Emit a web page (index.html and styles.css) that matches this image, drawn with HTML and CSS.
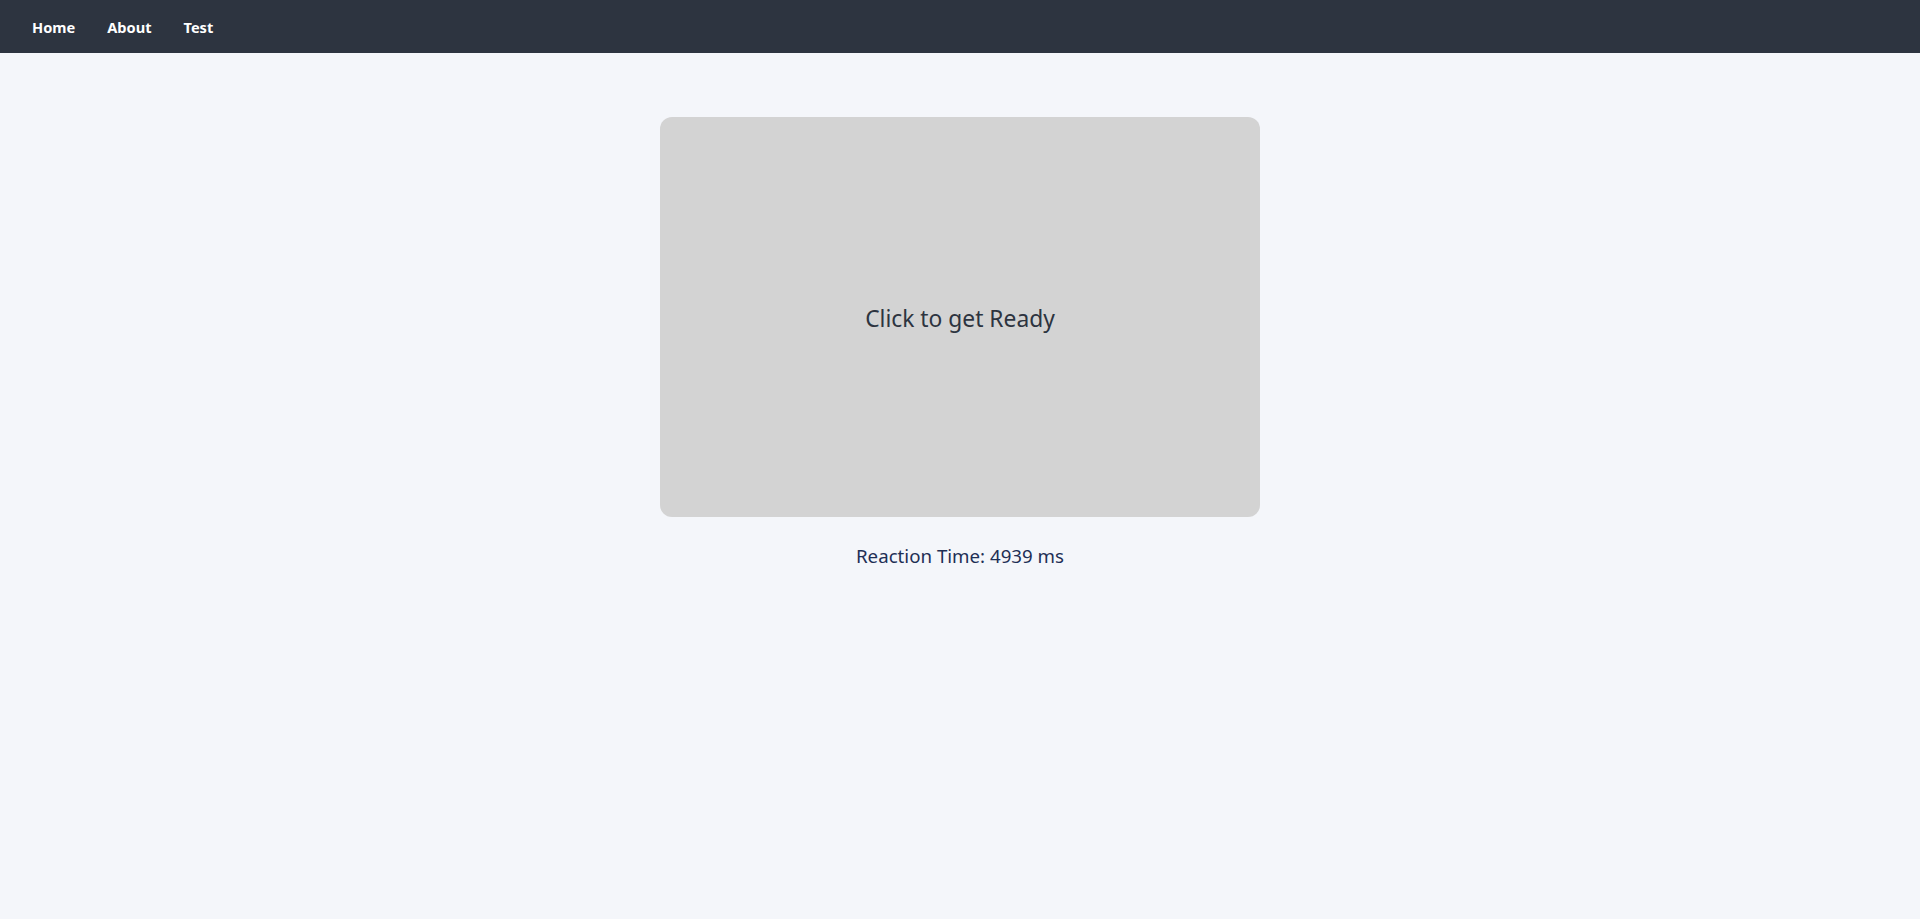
FILE: index.html
```html
<!DOCTYPE html>
<html lang="en">
<head>
<meta charset="utf-8">
<title>Reaction Time Test</title>
<link rel="stylesheet" href="styles.css">
</head>
<body>
<nav class="navbar">
  <a class="nav-link" href="#">Home</a>
  <a class="nav-link" href="#">About</a>
  <a class="nav-link" href="#">Test</a>
</nav>
<main class="content">
  <div class="test-box">Click to get Ready</div>
  <p class="result">Reaction Time: 4939 ms</p>
</main>
</body>
</html>
```

FILE: styles.css
```css
html, body {
  margin: 0;
  padding: 0;
}
body {
  background: #f4f6fa;
  font-family: "Noto Sans", "Open Sans", sans-serif;
  min-height: 100vh;
}
.navbar {
  height: 53px;
  background: #2d3440;
  display: flex;
  align-items: center;
  gap: 32px;
  padding: 0 32px;
  box-sizing: border-box;
}
.nav-link {
  color: #ffffff;
  text-decoration: none;
  font-weight: 700;
  font-size: 14.6px;
}
.content {
  display: flex;
  flex-direction: column;
  align-items: center;
  padding-top: 64px;
}
.test-box {
  width: 600px;
  height: 400px;
  box-sizing: border-box;
  padding-top: 3px;
  background: #d3d3d3;
  border-radius: 12px;
  display: flex;
  align-items: center;
  justify-content: center;
  font-size: 22.8px;
  color: #2d3440;
}
.result {
  margin: 25px 0 0;
  font-size: 18.7px;
  line-height: 28px;
  color: #1e2f55;
}
```
